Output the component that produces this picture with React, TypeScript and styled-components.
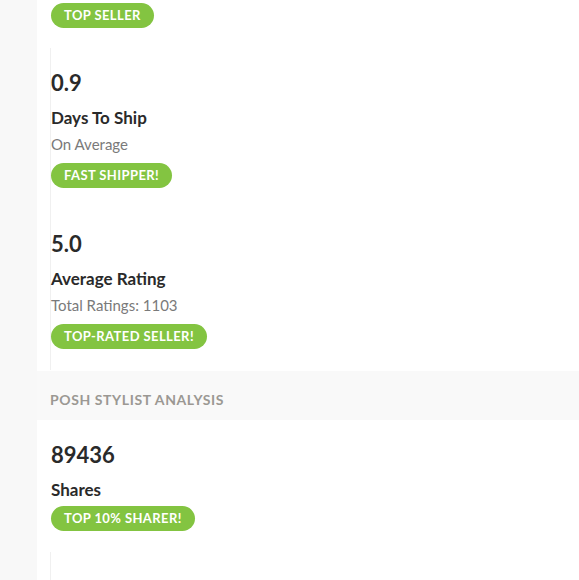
import React from 'react';
import styled, { createGlobalStyle } from 'styled-components';

const GlobalStyle = createGlobalStyle`
  body {
    margin: 0;
    background: #f8f8f8;
    font-family: Lato, "Noto Sans", sans-serif;
  }
`;

const colors = {
  green: '#83c441',
  text: '#2a2a2a',
  gray: '#7a7a7a',
  headerText: '#9b9893',
  line: '#f0f0f0',
  band: '#f9f9f9'
};

const Page = styled.div`
  padding-left: 37px;
  height: 580px;
  overflow: hidden;
`;

const Panel = styled.div`
  background: #ffffff;
`;

const Section = styled.div<{ tail?: number }>`
  padding-left: 13px;
  padding-bottom: ${({ tail }) => tail || 0}px;
`;

const SectionHeader = styled.div`
  background: ${colors.band};
  padding: 21px 13px 12px;
  font-size: 14px;
  line-height: 16px;
  font-weight: 700;
  letter-spacing: 0.6px;
  color: ${colors.headerText};
  text-transform: uppercase;
`;

const Item = styled.div<{ cropped?: boolean }>`
  display: flex;
  flex-direction: column;
  align-items: flex-start;
  padding: ${({ cropped }) => (cropped ? '3px 0 20px 1px' : '21px 0 21px 1px')};
  &:not(:first-child) {
    border-left: 1px solid ${colors.line};
    padding-left: 0;
  }
`;

const Value = styled.div`
  font-size: 22px;
  line-height: 28px;
  font-weight: 700;
  color: ${colors.text};
`;

const Label = styled.div`
  margin-top: 10px;
  font-size: 17px;
  line-height: 22px;
  font-weight: 700;
  color: ${colors.text};
`;

const Sub = styled.div`
  margin: 5px 0 2px;
  font-size: 15px;
  line-height: 20px;
  color: ${colors.gray};
`;

const Badge = styled.div`
  margin-top: 7px;
  height: 25px;
  padding: 0 13px;
  border-radius: 13px;
  background: ${colors.green};
  color: #ffffff;
  font-size: 13px;
  line-height: 25px;
  font-weight: 700;
  letter-spacing: 0.4px;
  text-transform: uppercase;
  white-space: nowrap;
  ${Label} + & {
    margin-top: 5px;
  }
`;

const TopBadge = styled(Badge)`
  margin-top: 0;
`;

type Stat = {
  value: string;
  label: string;
  sub?: string;
  badge: string;
};

const sellerStats: Stat[] = [
  { value: '0.9', label: 'Days To Ship', sub: 'On Average', badge: 'Fast Shipper!' },
  { value: '5.0', label: 'Average Rating', sub: 'Total Ratings: 1103', badge: 'Top-Rated Seller!' }
];

const stylistStats: Stat[] = [{ value: '89436', label: 'Shares', badge: 'Top 10% Sharer!' }];

const StatItem = ({ value, label, sub, badge }: Stat) => (
  <Item>
    <Value>{value}</Value>
    <Label>{label}</Label>
    {sub && <Sub>{sub}</Sub>}
    <Badge>{badge}</Badge>
  </Item>
);

const App = () => (
  <>
    <GlobalStyle />
    <Page>
      <Panel>
        <Section tail={1}>
          <Item cropped>
            <TopBadge>Top Seller</TopBadge>
          </Item>
          {sellerStats.map((s) => (
            <StatItem key={s.label} {...s} />
          ))}
        </Section>
        <SectionHeader>Posh Stylist Analysis</SectionHeader>
        <Section>
          {stylistStats.map((s) => (
            <StatItem key={s.label} {...s} />
          ))}
          <Item>
            <Value>&nbsp;</Value>
          </Item>
        </Section>
      </Panel>
    </Page>
  </>
);

export default App;
